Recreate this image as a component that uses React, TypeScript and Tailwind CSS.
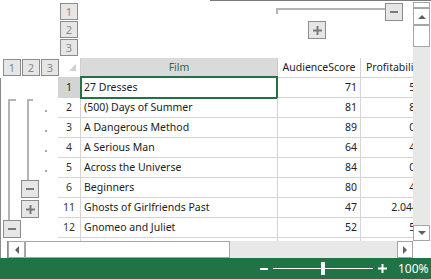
import React from 'react'

const font = { fontFamily: '"Noto Sans", "Open Sans", Arial, sans-serif' }

const rows = [
  { n: '1', film: '27 Dresses', aud: 71, prof: '5.343622' },
  { n: '2', film: '(500) Days of Summer', aud: 81, prof: '8.096000' },
  { n: '3', film: 'A Dangerous Method', aud: 89, prof: '0.448645' },
  { n: '4', film: 'A Serious Man', aud: 64, prof: '4.382857' },
  { n: '5', film: 'Across the Universe', aud: 84, prof: '0.652603' },
  { n: '6', film: 'Beginners', aud: 80, prof: '4.471875' },
  { n: '11', film: 'Ghosts of Girlfriends Past', aud: 47, prof: '2.044444444' },
  { n: '12', film: 'Gnomeo and Juliet', aud: 52, prof: '5.387972' },
]

function LevelBtn({ label }: { label: string }) {
  return (
    <div className="w-[18px] h-[17px] shrink-0 border border-[#8c8c8c] bg-[#e6e6e6] flex items-center justify-center text-[11px] leading-none text-[#8a8a8a]">
      {label}
    </div>
  )
}

function Minus() {
  return <div className="w-[8px] h-[2px] bg-[#7a7a7a]" />
}

function Plus() {
  return (
    <svg width="9" height="9" viewBox="0 0 9 9">
      <rect x="0" y="3.5" width="9" height="2" fill="#7a7a7a" />
      <rect x="3.5" y="0" width="2" height="9" fill="#7a7a7a" />
    </svg>
  )
}

function OutlineBtn({ children }: { children: React.ReactNode }) {
  return (
    <div className="w-[18px] h-[18px] shrink-0 border border-[#8c8c8c] bg-[#e6e6e6] flex items-center justify-center">
      {children}
    </div>
  )
}

function Gutter({ i }: { i: number }) {
  // i = index in rows (0 is row 1)
  const l1 = i >= 1 && i <= 6
  const l1btn = i === 7
  const l2 = i >= 1 && i <= 4
  const l2minus = i === 5
  const l2plus = i === 6
  const dot = i >= 1 && i <= 4
  return (
    <div className="w-[58px] shrink-0 flex pl-[2px] border-l border-[#8c8c8c]">
      <div className="w-[18px] shrink-0 flex flex-col">
        {l1 && (
          <div className={`ml-[5px] w-[8px] flex-1 border-l-2 border-[#b4b4b4] ${i === 1 ? 'mt-[1px] border-t-2' : ''}`} />
        )}
        {l1btn && (
          <>
            <div className="ml-[5px] h-[2px] border-l-2 border-[#b4b4b4]" />
            <OutlineBtn>
              <Minus />
            </OutlineBtn>
          </>
        )}
      </div>
      <div className="w-[18px] shrink-0 flex flex-col">
        {l2 && (
          <div className={`ml-[6px] w-[6px] flex-1 border-l-2 border-[#b4b4b4] ${i === 1 ? 'mt-[1px] border-t-2' : ''}`} />
        )}
        {(l2minus || l2plus) && (
          <>
            <div className={`ml-[6px] h-[2px] ${l2minus ? 'border-l-2 border-[#b4b4b4]' : ''}`} />
            <OutlineBtn>{l2minus ? <Minus /> : <Plus />}</OutlineBtn>
          </>
        )}
      </div>
      <div className="w-[18px] shrink-0">
        {dot && <div className="ml-[6px] mt-[12px] w-[2px] h-[2px] bg-[#a8a8a8]" />}
      </div>
    </div>
  )
}

function ScrollArrow({ dir, className }: { dir: 'up' | 'down' | 'left' | 'right'; className: string }) {
  const tri =
    dir === 'up'
      ? 'border-l-[4px] border-r-[4px] border-b-[4px] border-l-transparent border-r-transparent border-b-[#606060]'
      : dir === 'down'
        ? 'border-l-[4px] border-r-[4px] border-t-[4px] border-l-transparent border-r-transparent border-t-[#606060]'
        : dir === 'left'
          ? 'border-t-[4px] border-b-[4px] border-r-[4px] border-t-transparent border-b-transparent border-r-[#606060]'
          : 'border-t-[4px] border-b-[4px] border-l-[4px] border-t-transparent border-b-transparent border-l-[#606060]'
  return (
    <div className={`shrink-0 border border-[#a6a6a6] bg-white flex items-center justify-center ${className}`}>
      <div className={`w-0 h-0 ${tri}`} />
    </div>
  )
}

export default function App() {
  return (
    <div className="w-[431px] h-[279px] bg-white flex flex-col overflow-hidden text-[#222]" style={font}>
      <div className="h-[258px] flex">
        {/* sheet area */}
        <div className="w-[413px] flex flex-col">
          {/* column outline strip */}
          <div className="h-[58px] flex flex-col gap-[1px]">
            <div className="ml-[210px] h-[1px] bg-[#7a7a7a] mb-[1px]" />
            <div className="flex h-[17px]">
              <div className="ml-[60px]">
                <LevelBtn label="1" />
              </div>
              <div className="ml-[198px] mt-[5px] w-[109px] h-[6px] border-t-2 border-l-2 border-[#b4b4b4]" />
              <OutlineBtn>
                <Minus />
              </OutlineBtn>
            </div>
            <div className="flex h-[17px]">
              <div className="ml-[60px]">
                <LevelBtn label="2" />
              </div>
              <div className="ml-[230px]">
                <OutlineBtn>
                  <Plus />
                </OutlineBtn>
              </div>
            </div>
            <div className="flex h-[17px]">
              <div className="ml-[60px]">
                <LevelBtn label="3" />
              </div>
            </div>
          </div>

          {/* header row */}
          <div className="h-[20px] flex text-[10.5px]">
            <div className="w-[58px] shrink-0 flex gap-[1px] pl-[3px] pt-[1px]">
              <LevelBtn label="1" />
              <LevelBtn label="2" />
              <LevelBtn label="3" />
            </div>
            <div className="w-[23px] shrink-0 border-b border-r border-[#d0d0d0] flex items-end justify-end pr-[4px] pb-[6px]">
              <div className="w-0 h-0 border-l-[7px] border-b-[7px] border-l-transparent border-b-[#d0d0d0]" />
            </div>
            <div className="w-[197px] shrink-0 bg-[#dadada] border-b border-r border-[#c8c8c8] flex items-center justify-center text-[#2c6b47]">
              Film
            </div>
            <div className="w-[83px] shrink-0 border-b border-r border-[#d0d0d0] flex items-center justify-center overflow-hidden whitespace-nowrap">
              AudienceScore
            </div>
            <div className="w-[52px] shrink-0 border-b border-[#d0d0d0] flex items-center pl-[5px] overflow-hidden whitespace-nowrap">
              Profitability
            </div>
          </div>

          {/* data rows */}
          {rows.map((r, i) => (
            <div key={r.n} className="h-[20px] flex text-[10.5px]">
              <Gutter i={i} />
              <div
                className={`w-[23px] shrink-0 border-b border-r border-[#d4d4d4] flex items-center justify-center ${
                  i === 0 ? 'bg-[#d4d4d4] text-[#222]' : 'text-[#333]'
                }`}
              >
                {r.n}
              </div>
              <div className="relative w-[197px] shrink-0 border-b border-r border-[#d4d4d4] flex items-center pl-[3px] whitespace-nowrap">
                {r.film}
                {i === 0 && <div className="absolute -top-[2px] -left-[1px] -right-[1px] -bottom-[2px] border-2 border-[#217346]" />}
              </div>
              <div className="w-[83px] shrink-0 border-b border-r border-[#d4d4d4] flex items-center justify-end pr-[3px]">
                {r.aud}
              </div>
              <div className="w-[52px] shrink-0 border-b border-[#d4d4d4] overflow-hidden">
                <div className="w-[96px] h-full flex items-center justify-end pr-[3px]">{r.prof}</div>
              </div>
            </div>
          ))}

          {/* partial row */}
          <div className="h-[3px] flex">
            <div className="w-[58px] shrink-0 border-l border-[#8c8c8c]" />
            <div className="w-[23px] shrink-0 border-r border-[#d4d4d4]" />
            <div className="w-[197px] shrink-0 border-r border-[#d4d4d4]" />
            <div className="w-[83px] shrink-0 border-r border-[#d4d4d4]" />
          </div>

          {/* horizontal scrollbar */}
          <div className="h-[17px] flex">
            <div className="w-[8px] shrink-0 border-l border-r border-[#8c8c8c] bg-white" />
            <ScrollArrow dir="left" className="w-[17px] h-[17px]" />
            <div className="w-[205px] h-[17px] shrink-0 border border-[#a6a6a6] bg-white" />
            <div className="flex-1 bg-[#e8e8e8]" />
            <ScrollArrow dir="right" className="w-[16px] h-[17px]" />
          </div>
        </div>

        {/* vertical scrollbar */}
        <div className="w-[18px] flex flex-col">
          <div className="h-[1px] bg-[#7a7a7a]" />
          <div className="mt-[1px] h-[6px] w-[17px] border border-[#a6a6a6] bg-white" />
          <ScrollArrow dir="up" className="w-[17px] h-[17px]" />
          <div className="w-[17px] h-[22px] border border-[#a6a6a6] bg-white" />
          <div className="flex-1 w-[17px] bg-[#e8e8e8]" />
          <ScrollArrow dir="down" className="w-[17px] h-[16px]" />
          <div className="h-[17px] bg-white" />
        </div>
      </div>

      {/* status bar */}
      <div className="h-[21px] bg-[#217346] flex items-center text-white">
        <div className="ml-[260px] w-[8px] h-[2px] bg-white" />
        <div className="ml-[5px] w-[100px] h-[1px] bg-white flex items-center justify-center">
          <div className="w-[4px] h-[13px] bg-white" />
        </div>
        <div className="ml-[5px]">
          <svg width="9" height="9" viewBox="0 0 9 9">
            <rect x="0" y="3.5" width="9" height="2" fill="#fff" />
            <rect x="3.5" y="0" width="2" height="9" fill="#fff" />
          </svg>
        </div>
        <div className="ml-[11px] text-[12px] leading-none">100%</div>
      </div>
    </div>
  )
}
